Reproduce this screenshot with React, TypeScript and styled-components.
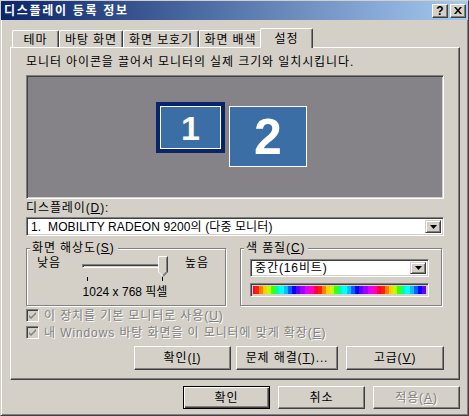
import styled, { createGlobalStyle } from 'styled-components';

const GlobalStyle = createGlobalStyle`
  * { box-sizing: border-box; }
  body {
    margin: 0;
    background: #d4d0c8;
    font-family: "Liberation Sans", "Noto Sans CJK KR", sans-serif;
    font-size: 12px;
    letter-spacing: 0.9px;
    color: #000;
  }
`;

const FACE = '#d4d0c8';

const Window = styled.div`
  width: 469px;
  height: 416px;
  display: flex;
  flex-direction: column;
  background: ${FACE};
  border: 1px solid;
  border-color: ${FACE} #404040 #404040 ${FACE};
  box-shadow: inset 1px 1px #fff, inset -1px -1px #808080;
`;

const TitleBar = styled.div`
  height: 19px;
  display: flex;
  align-items: center;
  padding: 0 2px 0 3px;
  background: linear-gradient(to right, #0a246a, #a6caf0);
`;

const TitleText = styled.div`
  flex: 1;
  color: #fff;
  font-weight: bold;
  font-size: 12px;
  letter-spacing: 1.7px;
  line-height: 14px;
`;

const CaptionButton = styled.div<{ $gap?: number }>`
  width: 16px;
  height: 14px;
  margin-left: ${(p) => p.$gap ?? 0}px;
  display: flex;
  align-items: center;
  justify-content: center;
  background: ${FACE};
  border: 1px solid;
  border-color: #fff #404040 #404040 #fff;
  box-shadow: inset -1px -1px #808080;
  font-family: "Liberation Sans", sans-serif;
  font-weight: bold;
  font-size: 12px;
  line-height: 12px;
  letter-spacing: 0;
`;

const Body = styled.div`
  flex: 1;
  padding: 8px 8px 0 9px;
  display: flex;
  flex-direction: column;
`;

const TabRow = styled.div`
  display: flex;
  align-items: flex-end;
  height: 19px;
  padding-left: 2px;
`;

const Tab = styled.div<{ $w: number; $active?: boolean }>`
  width: ${(p) => p.$w}px;
  height: ${(p) => (p.$active ? 20 : 17)}px;
  margin: ${(p) => (p.$active ? '0 -1px -1px -2px' : '0')};
  position: relative;
  z-index: ${(p) => (p.$active ? 2 : 0)};
  display: flex;
  align-items: center;
  justify-content: center;
  padding-top: ${(p) => (p.$active ? 0 : 1)}px;
  background: ${FACE};
  border-top: 1px solid #fff;
  border-left: 1px solid #fff;
  border-right: 1px solid #404040;
  border-radius: 2px 2px 0 0;
  box-shadow: inset -1px 0 #808080;
  line-height: 14px;
`;

const Panel = styled.div`
  width: 450px;
  height: 333px;
  position: relative;
  z-index: 1;
  display: flex;
  flex-direction: column;
  padding: 7px 15px 0 15px;
  border: 1px solid;
  border-color: #fff #404040 #404040 #fff;
  box-shadow: inset -1px -1px #808080;
`;

const Text = styled.div<{ $mt?: number; $tight?: boolean }>`
  margin-top: ${(p) => p.$mt ?? 0}px;
  line-height: 14px;
  white-space: pre;
  letter-spacing: ${(p) => (p.$tight ? '0' : 'inherit')};
`;

const Sunken = styled.div`
  border: 1px solid;
  border-color: #808080 #fff #fff #808080;
  box-shadow: inset 1px 1px #404040, inset -1px -1px ${FACE};
`;

const Canvas = styled(Sunken)`
  margin-top: 6px;
  height: 124px;
  position: relative;
  background: #858388;
`;

const Monitor = styled.div<{ $x: number; $y: number; $w: number; $h: number; $selected?: boolean; $size: number }>`
  position: absolute;
  left: ${(p) => p.$x}px;
  top: ${(p) => p.$y}px;
  width: ${(p) => p.$w}px;
  height: ${(p) => p.$h}px;
  display: flex;
  align-items: center;
  justify-content: center;
  background: #3a6ea5;
  border: ${(p) => (p.$selected ? '4px solid #0a246a' : '1px solid #fff')};
  box-shadow: ${(p) => (p.$selected ? 'inset 0 0 0 1px #fff' : 'none')};
  color: #fff;
  font-family: "Liberation Sans", Arial, sans-serif;
  font-weight: bold;
  font-size: ${(p) => p.$size}px;
  letter-spacing: 0;
  line-height: 1;
`;

const Combo = styled(Sunken)<{ $w?: number; $h: number; $mt: number }>`
  margin-top: ${(p) => p.$mt}px;
  width: ${(p) => (p.$w ? `${p.$w}px` : 'auto')};
  height: ${(p) => p.$h}px;
  display: flex;
  align-items: stretch;
  background: #fff;
  padding: 2px;
`;

const ComboText = styled.div<{ $tight?: boolean }>`
  flex: 1;
  padding-left: 2px;
  display: flex;
  align-items: center;
  white-space: pre;
  line-height: 14px;
  letter-spacing: ${(p) => (p.$tight ? '0.1px' : 'inherit')};
`;

const DropButton = styled.div`
  width: 16px;
  display: flex;
  align-items: center;
  justify-content: center;
  background: ${FACE};
  border: 1px solid;
  border-color: ${FACE} #404040 #404040 ${FACE};
  box-shadow: inset 1px 1px #fff, inset -1px -1px #808080;
`;

const GroupRow = styled.div`
  display: flex;
  gap: 14px;
  margin-top: 5px;
`;

const Group = styled.fieldset<{ $w: number }>`
  width: ${(p) => p.$w}px;
  height: 65px;
  margin: 0;
  padding: 0;
  min-width: 0;
  border: 1px solid #808080;
  box-shadow: 1px 1px #fff, inset 1px 1px #fff;
`;

const Legend = styled.legend`
  margin-left: 3px;
  padding: 0 3px 0 2px;
  line-height: 14px;
  background: ${FACE};
`;

const ResBody = styled.div`
  display: flex;
  padding-left: 10px;
`;

const ResLow = styled.div`
  width: 45px;
  line-height: 14px;
  padding-top: 1px;
`;

const ResHigh = styled.div`
  margin-left: 17px;
  line-height: 14px;
  padding-top: 1px;
`;

const SliderCol = styled.div`
  width: 86px;
  display: flex;
  flex-direction: column;
  align-items: center;
`;

const SliderBox = styled.div`
  width: 86px;
  height: 22px;
  position: relative;
  padding-top: 9px;
`;

const Track = styled.div`
  height: 4px;
  border: 1px solid;
  border-color: #808080 #fff #fff #808080;
  box-shadow: inset 1px 1px #404040, inset -1px -1px ${FACE};
`;

const Thumb = styled.svg`
  position: absolute;
  left: 76px;
  top: 1px;
`;

const Ticks = styled.div`
  width: 86px;
  height: 5px;
  display: flex;
  justify-content: space-between;
  padding: 0 5px 0 5px;
`;

const Tick = styled.div`
  width: 1px;
  height: 4px;
  background: #000;
`;

const ColorBody = styled.div`
  padding: 4px 0 0 9px;
  display: flex;
  flex-direction: column;
`;

const ColorBar = styled(Sunken)`
  margin-top: 6px;
  width: 179px;
  height: 14px;
  background: repeating-linear-gradient(
    to right,
    #ff0040 0 4px, #ff2000 4px 8px, #ff8000 8px 12px, #ffd000 12px 16px,
    #c0ff00 16px 20px, #40ff00 20px 24px, #00ffa0 24px 28px, #00ffff 28px 33px,
    #00c0ff 33px 37px, #0060ff 37px 41px, #0000ff 41px 45px, #6000ff 45px 49px,
    #a000ff 49px 54px, #e000ff 54px 58px, #ff00c0 58px 63px
  );
  background-clip: content-box;
  padding: 2px;
`;

const CheckRow = styled.div<{ $mt: number }>`
  margin-top: ${(p) => p.$mt}px;
  height: 17px;
  display: flex;
  align-items: center;
  gap: 5px;
`;

const CheckBox = styled(Sunken)`
  width: 13px;
  height: 13px;
  background: ${FACE};
  display: flex;
  align-items: center;
  justify-content: center;
`;

const Disabled = styled.span`
  color: #808080;
  text-shadow: 1px 1px #fff;
  line-height: 14px;
  white-space: pre;
`;

const ButtonRow = styled.div<{ $mt: number }>`
  margin-top: ${(p) => p.$mt}px;
  display: flex;
  justify-content: flex-end;
`;

const Button = styled.div<{ $w: number; $h: number; $ml?: number; $default?: boolean }>`
  width: ${(p) => p.$w}px;
  height: ${(p) => p.$h}px;
  margin-left: ${(p) => p.$ml ?? 0}px;
  display: flex;
  align-items: center;
  justify-content: center;
  background: ${FACE};
  border: 1px solid;
  border-color: ${(p) => (p.$default ? '#000' : '#fff #404040 #404040 #fff')};
  box-shadow: ${(p) =>
    p.$default
      ? 'inset 1px 1px #fff, inset -1px -1px #404040, inset -2px -2px #808080'
      : 'inset -1px -1px #808080'};
  line-height: 14px;
  white-space: pre;
`;

const Footer = styled.div`
  display: flex;
  justify-content: flex-end;
  gap: 8px;
  margin-top: 6px;
  width: 450px;
`;

function Arrow() {
  return (
    <svg width="7" height="4" viewBox="0 0 7 4">
      <path d="M0 0h7L3.5 4z" fill="#000" />
    </svg>
  );
}

function Check() {
  return (
    <svg width="9" height="9" viewBox="0 0 9 9">
      <path d="M1 4l2 2 5-5v2L3 8 1 6z" fill="#808080" />
    </svg>
  );
}

export default function App() {
  return (
    <>
      <GlobalStyle />
      <Window>
        <TitleBar>
          <TitleText>디스플레이 등록 정보</TitleText>
          <CaptionButton>?</CaptionButton>
          <CaptionButton $gap={2}>
            <svg width="8" height="7" viewBox="0 0 8 7">
              <path d="M0 0h2l2 2.5L6 0h2L5 3.5 8 7H6L4 4.5 2 7H0l3-3.5z" fill="#000" />
            </svg>
          </CaptionButton>
        </TitleBar>

        <Body>
          <TabRow>
            <Tab $w={47}>테마</Tab>
            <Tab $w={64}>바탕 화면</Tab>
            <Tab $w={76}>화면 보호기</Tab>
            <Tab $w={63}>화면 배색</Tab>
            <Tab $w={53} $active>설정</Tab>
          </TabRow>

          <Panel>
            <Text>모니터 아이콘을 끌어서 모니터의 실제 크기와 일치시킵니다.</Text>

            <Canvas>
              <Monitor $x={129} $y={26} $w={69} $h={51} $size={34} $selected>1</Monitor>
              <Monitor $x={202} $y={30} $w={78} $h={61} $size={50}>2</Monitor>
            </Canvas>

            <Text $mt={2}>
              디스플레이(<u>D</u>):
            </Text>
            <Combo $h={19} $mt={2}>
              <ComboText $tight>1.  MOBILITY RADEON 9200의 (다중 모니터)</ComboText>
              <DropButton>
                <Arrow />
              </DropButton>
            </Combo>

            <GroupRow>
              <Group $w={200}>
                <Legend>
                  화면 해상도(<u>S</u>)
                </Legend>
                <ResBody>
                  <ResLow>낮음</ResLow>
                  <SliderCol>
                    <SliderBox>
                      <Track />
                      <Thumb width="11" height="21" viewBox="0 0 11 21">
                        <path d="M0.5 0.5h9v15l-4.5 4.5-4.5-4.5z" fill="#d4d0c8" />
                        <path d="M0.5 16V0.5h9" stroke="#fff" fill="none" />
                        <path d="M9.5 0.5v15.5l-4.5 4.5" stroke="#404040" fill="none" />
                        <path d="M8.5 1.5v14l-4 4" stroke="#808080" fill="none" />
                        <path d="M0.5 16l4 4" stroke="#fff" fill="none" />
                      </Thumb>
                    </SliderBox>
                    <Ticks>
                      <Tick />
                      <Tick />
                    </Ticks>
                    <Text $mt={3} $tight>1024 x 768 픽셀</Text>
                  </SliderCol>
                  <ResHigh>높음</ResHigh>
                </ResBody>
              </Group>

              <Group $w={202}>
                <Legend>
                  색 품질(<u>C</u>)
                </Legend>
                <ColorBody>
                  <Combo $w={179} $h={18} $mt={0}>
                    <ComboText>중간(16비트)</ComboText>
                    <DropButton>
                      <Arrow />
                    </DropButton>
                  </Combo>
                  <ColorBar />
                </ColorBody>
              </Group>
            </GroupRow>

            <CheckRow $mt={1}>
              <CheckBox>
                <Check />
              </CheckBox>
              <Disabled>
                이 장치를 기본 모니터로 사용(<u>U</u>)
              </Disabled>
            </CheckRow>
            <CheckRow $mt={0}>
              <CheckBox>
                <Check />
              </CheckBox>
              <Disabled>
                내 Windows 바탕 화면을 이 모니터에 맞게 확장(<u>E</u>)
              </Disabled>
            </CheckRow>

            <ButtonRow $mt={5}>
              <Button $w={97} $h={24}>
                확인(<u>I</u>)
              </Button>
              <Button $w={102} $h={24} $ml={5}>
                문제 해결(<u>T</u>)...
              </Button>
              <Button $w={98} $h={24} $ml={8}>
                고급(<u>V</u>)
              </Button>
            </ButtonRow>
          </Panel>

          <Footer>
            <Button $w={87} $h={23} $default>
              확인
            </Button>
            <Button $w={87} $h={23}>
              취소
            </Button>
            <Button $w={87} $h={23}>
              <Disabled>
                적용(<u>A</u>)
              </Disabled>
            </Button>
          </Footer>
        </Body>
      </Window>
    </>
  );
}
